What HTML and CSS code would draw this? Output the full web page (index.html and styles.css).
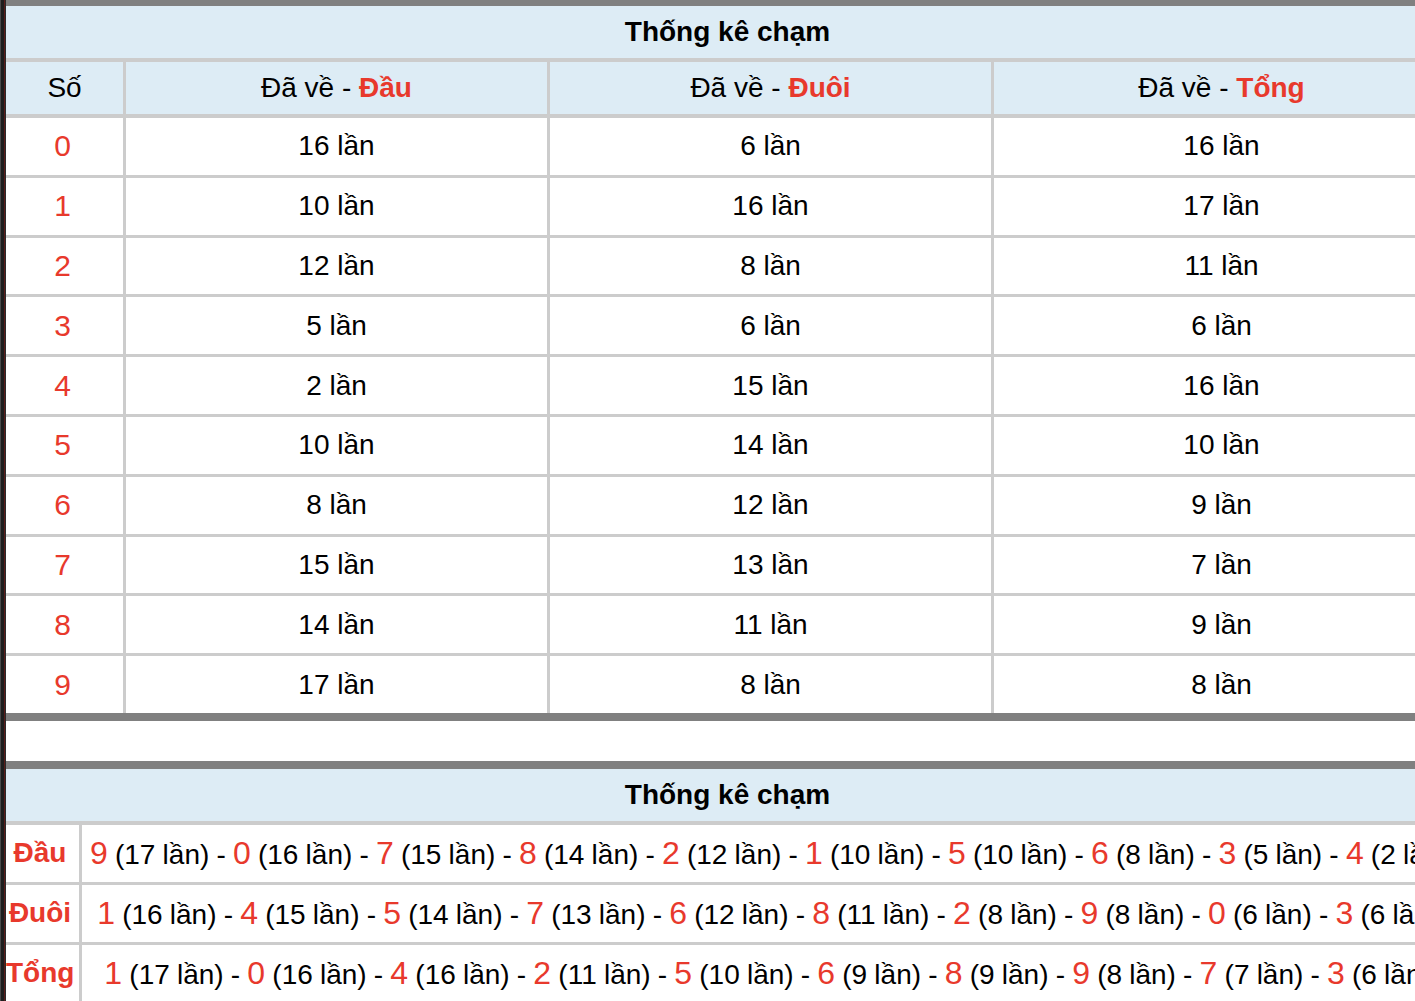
FILE: index.html
```html
<!DOCTYPE html>
<html lang="vi">
<head>
<meta charset="utf-8">
<title>Thống kê chạm</title>
<link rel="stylesheet" href="styles.css">
</head>
<body>
<div class="page">
  <div class="edge"></div>
  <main class="content">
    <table class="stat">
      <colgroup>
        <col class="c-num"><col class="c-dau"><col class="c-duoi"><col class="c-tong">
      </colgroup>
      <thead>
        <tr><th class="title" colspan="4">Thống kê chạm</th></tr>
        <tr class="head">
          <th>Số</th>
          <th>Đã về - <b class="hl">Đầu</b></th>
          <th>Đã về - <b class="hl">Đuôi</b></th>
          <th>Đã về - <b class="hl">Tổng</b></th>
        </tr>
      </thead>
      <tbody>
        <tr><td class="num">0</td><td>16 lần</td><td>6 lần</td><td>16 lần</td></tr>
        <tr><td class="num">1</td><td>10 lần</td><td>16 lần</td><td>17 lần</td></tr>
        <tr><td class="num">2</td><td>12 lần</td><td>8 lần</td><td>11 lần</td></tr>
        <tr><td class="num">3</td><td>5 lần</td><td>6 lần</td><td>6 lần</td></tr>
        <tr><td class="num">4</td><td>2 lần</td><td>15 lần</td><td>16 lần</td></tr>
        <tr><td class="num">5</td><td>10 lần</td><td>14 lần</td><td>10 lần</td></tr>
        <tr><td class="num">6</td><td>8 lần</td><td>12 lần</td><td>9 lần</td></tr>
        <tr><td class="num">7</td><td>15 lần</td><td>13 lần</td><td>7 lần</td></tr>
        <tr><td class="num">8</td><td>14 lần</td><td>11 lần</td><td>9 lần</td></tr>
        <tr><td class="num">9</td><td>17 lần</td><td>8 lần</td><td>8 lần</td></tr>
      </tbody>
    </table>

    <table class="stat summary">
      <colgroup>
        <col class="c-label"><col class="c-list">
      </colgroup>
      <thead>
        <tr><th class="title" colspan="2">Thống kê chạm</th></tr>
      </thead>
      <tbody>
        <tr>
          <th class="label">Đầu</th>
          <td class="list"><span class="d">9</span> (17 lần) - <span class="d">0</span> (16 lần) - <span class="d">7</span> (15 lần) - <span class="d">8</span> (14 lần) - <span class="d">2</span> (12 lần) - <span class="d">1</span> (10 lần) - <span class="d">5</span> (10 lần) - <span class="d">6</span> (8 lần) - <span class="d">3</span> (5 lần) - <span class="d">4</span> (2 lần)</td>
        </tr>
        <tr>
          <th class="label">Đuôi</th>
          <td class="list">&nbsp;<span class="d">1</span> (16 lần) - <span class="d">4</span> (15 lần) - <span class="d">5</span> (14 lần) - <span class="d">7</span> (13 lần) - <span class="d">6</span> (12 lần) - <span class="d">8</span> (11 lần) - <span class="d">2</span> (8 lần) - <span class="d">9</span> (8 lần) - <span class="d">0</span> (6 lần) - <span class="d">3</span> (6 lần)</td>
        </tr>
        <tr>
          <th class="label">Tổng</th>
          <td class="list">&nbsp;&nbsp;<span class="d">1</span> (17 lần) - <span class="d">0</span> (16 lần) - <span class="d">4</span> (16 lần) - <span class="d">2</span> (11 lần) - <span class="d">5</span> (10 lần) - <span class="d">6</span> (9 lần) - <span class="d">8</span> (9 lần) - <span class="d">9</span> (8 lần) - <span class="d">7</span> (7 lần) - <span class="d">3</span> (6 lần)</td>
        </tr>
      </tbody>
    </table>
  </main>
</div>
</body>
</html>
```

FILE: styles.css
```css
html, body {
  margin: 0;
  padding: 0;
  overflow: hidden;
  background: #ffffff;
}

body {
  font-family: "Liberation Sans", Arial, sans-serif;
  font-size: 28px;
  color: #000;
}

.page {
  display: flex;
  align-items: stretch;
  min-height: 1001px;
}

.edge {
  flex: 0 0 6px;
  width: 6px;
  background: linear-gradient(to right, #4a4a4a 0, #4a4a4a 1px, #1e1e1e 1px, #1e1e1e 4px, #5a1c1a 4px, #5a1c1a 5px, #2a2a2a 5px);
}

.content {
  flex: 0 0 1443px;
  width: 1443px;
}

.stat {
  width: 1443px;
  table-layout: fixed;
  border-collapse: separate;
  border-spacing: 0;
  border-top: 6px solid #808080;
  border-bottom: 8px solid #808080;
}

.stat th,
.stat td {
  padding: 0;
  text-align: center;
  vertical-align: middle;
  border-right: 3px solid #cccccc;
  border-bottom: 3px solid #cccccc;
  line-height: normal;
}

.stat th:last-child,
.stat td:last-child {
  border-right: none;
}

.stat tbody tr:last-child td,
.stat tbody tr:last-child th {
  border-bottom: none;
}

.c-num { width: 120px; }
.c-dau { width: 424px; }
.c-duoi { width: 444px; }
.c-tong { width: 455px; }

.stat .title {
  height: 52px;
  background: #ddecf5;
  font-weight: bold;
  border-bottom: 4px solid #cccccc;
  border-right: none;
}

.head th {
  height: 52px;
  background: #ddecf5;
  font-weight: normal;
  border-bottom: 4px solid #cccccc;
}

.hl {
  color: #e8392c;
  font-weight: bold;
}

.stat tbody td {
  height: 56.8px;
}

.stat td.num {
  color: #e8392c;
  font-size: 30px;
  padding-right: 4px;
}

.summary {
  margin-top: 40px;
  border-top-width: 8px;
}

.c-label { width: 76px; }
.c-list { width: 1367px; }

.summary tbody th,
.summary tbody td {
  height: 57px;
}

.summary .label {
  color: #e8392c;
  font-weight: bold;
  font-size: 28px;
  white-space: nowrap;
  padding-right: 5px;
}

.summary .list {
  text-align: left;
  white-space: nowrap;
  overflow: hidden;
  padding-left: 8px;
  word-spacing: -0.6px;
}

.d {
  color: #e8392c;
  font-size: 32px;
}
```
